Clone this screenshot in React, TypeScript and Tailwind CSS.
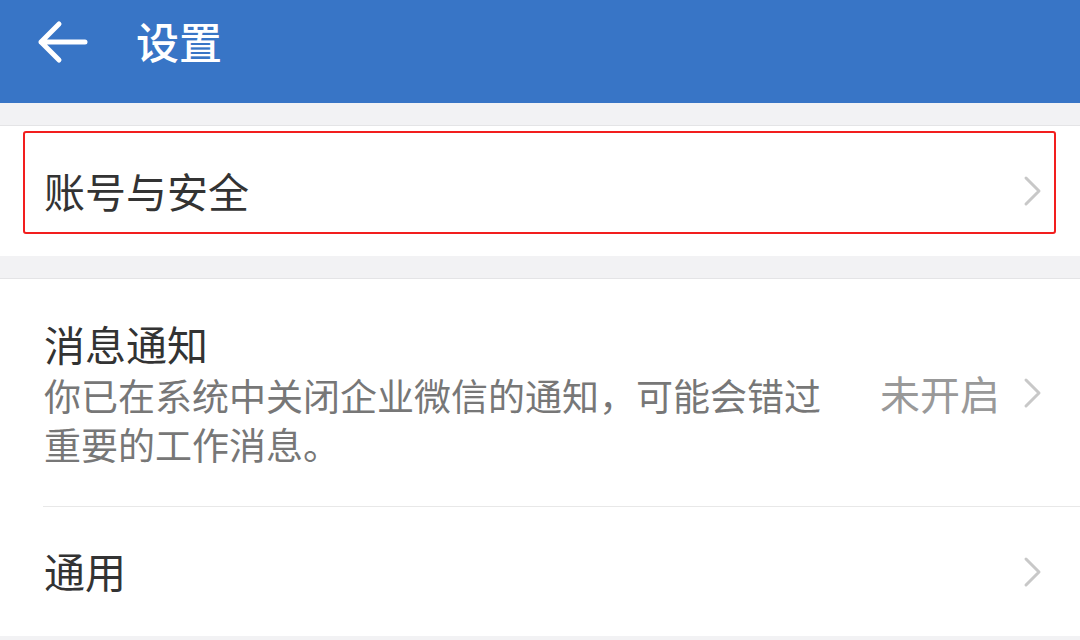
const FONT = { fontFamily: '"Noto Sans CJK SC", "Noto Sans", sans-serif' };

function Chevron() {
  return (
    <svg width="22" height="32" viewBox="0 0 22 32" className="shrink-0">
      <path d="M4 3 L17 16 L4 29" fill="none" stroke="#c8c8c8" strokeWidth="3" strokeLinecap="round" strokeLinejoin="round" />
    </svg>
  );
}

function BackArrow() {
  return (
    <svg width="52" height="44" viewBox="0 0 52 44" className="shrink-0">
      <path d="M22 4 L4 22 L22 40 M4 22 L48 22" fill="none" stroke="#fff" strokeWidth="5" strokeLinecap="round" strokeLinejoin="round" />
    </svg>
  );
}

export default function App() {
  return (
    <div className="w-[1080px] h-[640px] overflow-hidden bg-[#f2f2f4]" style={FONT}>
      <div className="h-[103px] bg-[#3875c6] flex items-center pl-[37px] pb-[20px]">
        <BackArrow />
        <span className="ml-[47px] text-[43px] font-medium text-white leading-none -mt-[2px]">设置</span>
      </div>

      <div className="h-[23px] border-b border-[#e4e4e6]" />

      <div className="relative bg-white h-[130px] flex items-center justify-between pl-[44px] pr-[36px]">
        <span className="text-[41px] text-[#333] leading-none -mt-[2px]">账号与安全</span>
        <Chevron />
        <div className="absolute left-[23px] top-[5px] w-[1033px] h-[103px] border-2 border-[#f21e1e] rounded-[3px]" />
      </div>

      <div className="h-[23px] border-b border-[#e4e4e6]" />

      <div className="bg-white">
        <div className="h-[227px] flex items-center justify-between pl-[44px] pr-[36px]">
          <div className="w-[800px]">
            <div className="text-[41px] text-[#333] leading-[52px]">消息通知</div>
            <div className="text-[37px] text-[#777] leading-[49px] mt-[2px]">
              你已在系统中关闭企业微信的通知，可能会错过重要的工作消息。
            </div>
          </div>
          <div className="flex items-center gap-[22px]">
            <span className="text-[40px] text-[#999] leading-none">未开启</span>
            <Chevron />
          </div>
        </div>
        <div className="ml-[43px] border-t border-[#e8e8e8]" />
        <div className="h-[129px] flex items-center justify-between pl-[44px] pr-[36px]">
          <span className="text-[41px] text-[#333] leading-none -mt-[2px]">通用</span>
          <Chevron />
        </div>
      </div>
    </div>
  );
}
